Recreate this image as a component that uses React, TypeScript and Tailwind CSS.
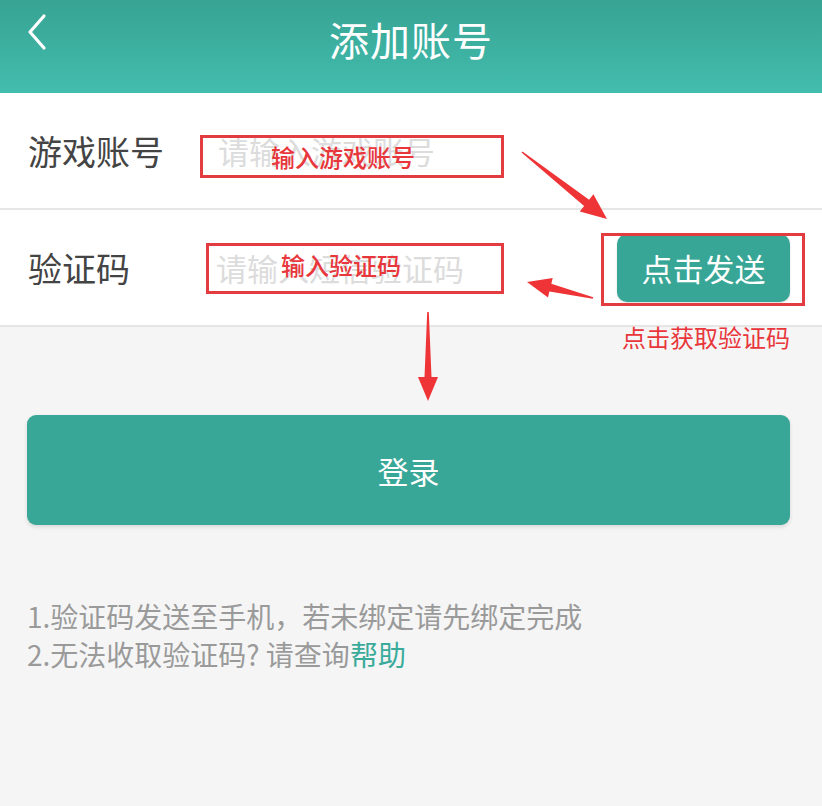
import React from 'react'

type Pt = [number, number]

// tapered annotation arrow: thin tail, wider shaft near head, pointed head
function arrowPoints(tail: Pt, tip: Pt, headLen = 24, headHalf = 10, neckHalf = 4) {
  const dx = tip[0] - tail[0]
  const dy = tip[1] - tail[1]
  const len = Math.hypot(dx, dy)
  const ux = dx / len
  const uy = dy / len
  const nx = -uy
  const ny = ux
  const bx = tip[0] - ux * headLen
  const by = tip[1] - uy * headLen
  const pts: Pt[] = [
    [tail[0] + nx * 0.8, tail[1] + ny * 0.8],
    [bx + nx * neckHalf, by + ny * neckHalf],
    [bx + nx * headHalf, by + ny * headHalf],
    tip,
    [bx - nx * headHalf, by - ny * headHalf],
    [bx - nx * neckHalf, by - ny * neckHalf],
    [tail[0] - nx * 0.8, tail[1] - ny * 0.8],
  ]
  return pts.map((p) => `${p[0].toFixed(1)},${p[1].toFixed(1)}`).join(' ')
}

export default function App() {
  const font = { fontFamily: '"Noto Sans CJK SC", "Noto Sans", sans-serif' }

  return (
    <div className="relative w-full h-[806px] bg-[#f5f5f5] overflow-hidden" style={font}>
      {/* Header */}
      <div className="relative h-[93px] bg-gradient-to-b from-[#37a393] to-[#43bdae] flex items-center justify-center pb-[16px]">
        <svg className="absolute left-[24px] top-[13px]" width="26" height="38" viewBox="0 0 26 38">
          <path d="M20 3 L6 19 L20 35" fill="none" stroke="#ffffff" strokeWidth="3.2" strokeLinecap="round" strokeLinejoin="round" />
        </svg>
        <h1 className="text-[40px] text-white leading-none tracking-[1px]">添加账号</h1>
      </div>

      {/* Form rows */}
      <div className="bg-white">
        <div className="h-[117px] flex items-center pl-[28px] border-b-2 border-[#e6e6e6]">
          <span className="w-[190px] text-[34px] text-[#444444] leading-none">游戏账号</span>
          <span className="text-[31px] text-[#dcdcdc] leading-none">请输入游戏账号</span>
        </div>
        <div className="h-[117px] flex items-center pl-[28px] pr-[32px] border-b-2 border-[#e6e6e6]">
          <span className="w-[188px] text-[34px] text-[#444444] leading-none">验证码</span>
          <span className="flex-1 text-[31px] text-[#dcdcdc] leading-none">请输入短信验证码</span>
          <button className="w-[173px] h-[68px] rounded-[10px] bg-[#38a696] text-white text-[31px] leading-none shadow-[0_1px_2px_rgba(0,0,0,0.15)]">
            点击发送
          </button>
        </div>
      </div>

      {/* Login */}
      <div className="px-[27px] pr-[32px] mt-[88px]">
        <button className="w-full h-[110px] rounded-[9px] bg-[#39a797] text-white text-[31px] leading-none shadow-[0_2px_4px_rgba(0,0,0,0.12)]">
          登录
        </button>
      </div>

      {/* Notes */}
      <div className="px-[27px] mt-[72px] text-[28px] leading-[38px] text-[#9a9a9a]">
        <p>1.验证码发送至手机，若未绑定请先绑定完成</p>
        <p>
          2.无法收取验证码? 请查询<span className="text-[#3aab9a]">帮助</span>
        </p>
      </div>

      {/* Annotations */}
      <div className="absolute left-[200px] top-[135px] w-[304px] h-[43px] border-[3px] border-[#e23c40] flex items-center justify-center pr-[18px]">
        <span className="text-[24px] font-medium text-[#e8363b] leading-none">输入游戏账号</span>
      </div>
      <div className="absolute left-[206px] top-[243px] w-[298px] h-[51px] border-[3px] border-[#e23c40] flex items-start justify-center pt-[7px] pr-[28px]">
        <span className="text-[24px] font-medium text-[#e8363b] leading-none">输入验证码</span>
      </div>
      <div className="absolute left-[601px] top-[233px] w-[204px] h-[73px] border-[3px] border-[#e23c40]" />
      <span className="absolute left-[622px] top-[325px] text-[24px] text-[#e8363b] leading-none">点击获取验证码</span>

      <svg className="absolute left-0 top-0 pointer-events-none" width="822" height="806" viewBox="0 0 822 806">
        <polygon points={arrowPoints([522, 152], [607, 219], 26, 11, 4)} fill="#ef3438" />
        <polygon points={arrowPoints([593, 298], [527, 282], 24, 10, 4)} fill="#ef3438" />
        <polygon points={arrowPoints([428, 312], [428, 401], 24, 10, 3.5)} fill="#ef3438" />
      </svg>
    </div>
  )
}
